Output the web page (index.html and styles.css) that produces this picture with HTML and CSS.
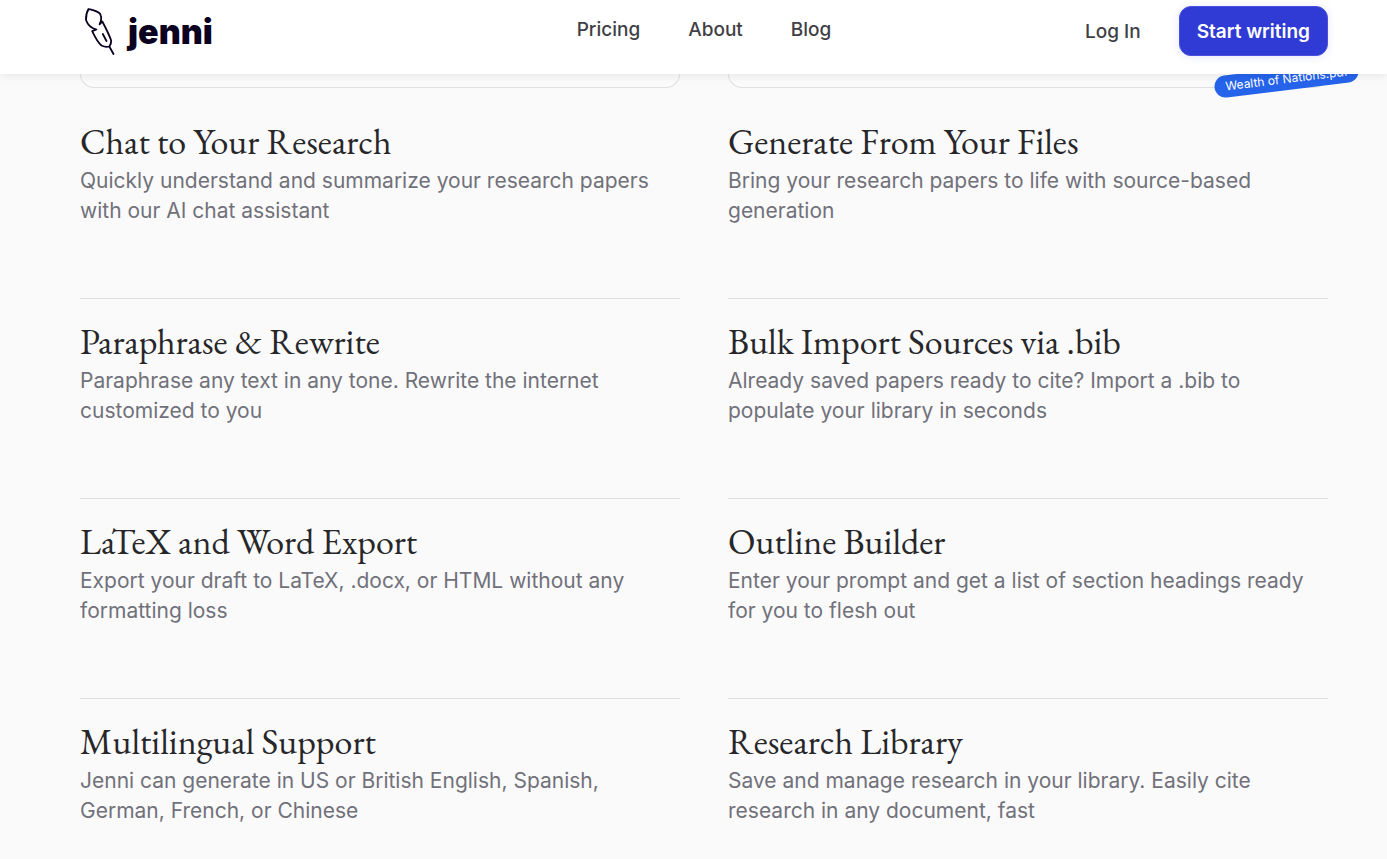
FILE: index.html
```html
<!DOCTYPE html>
<html lang="en">
<head>
    <meta charset="UTF-8">
    <meta name="viewport" content="width=device-width, initial-scale=1.0">
    <title>Jenni AI</title>
    <link rel="stylesheet" href="styles.css">
</head>
<body>
    <header class="header">
        <a href="#" class="logo">
            <svg class="logo-icon" viewBox="0 0 34 50" fill="none" stroke="currentColor" stroke-width="1.8" stroke-linejoin="round" stroke-linecap="round" aria-hidden="true">
                <path d="M4.500 3C2.500 6.500 1.800 10 2 14C3.500 18.500 6.500 22 12.500 23.500L8.200 25.200C11 31 13.500 36.500 17.500 39.500C20 40.800 22.500 41.200 25.300 40.500C27 38.500 27.300 36.800 27.200 34.500C25 28.500 21.500 21.500 18.300 15.500L15.600 18.300C17.700 14.500 17.500 11 16.200 8C13 4.800 9 4.200 4.500 3Z"/>
                <path d="M18.800 28L22.500 35M25.300 40.500L29.500 48"/>
            </svg>
            <span class="logo-text">jenni</span>
        </a>
        <nav class="nav">
            <a href="#">Pricing</a>
            <a href="#">About</a>
            <a href="#">Blog</a>
        </nav>
        <div class="actions">
            <a href="#" class="login">Log In</a>
            <button type="button" class="btn">Start writing</button>
        </div>
    </header>

    <main class="features">
        <section class="feature feature-media">
            <div class="preview"></div>
            <h3>Chat to Your Research</h3>
            <p>Quickly understand and summarize your research papers with our AI chat assistant</p>
        </section>
        <section class="feature feature-media">
            <div class="preview">
                <span class="file-tag">Wealth of Nations.pdf</span>
            </div>
            <h3>Generate From Your Files</h3>
            <p>Bring your research papers to life with source-based generation</p>
        </section>
        <section class="feature">
            <h3>Paraphrase &amp; Rewrite</h3>
            <p>Paraphrase any text in any tone. Rewrite the internet customized to you</p>
        </section>
        <section class="feature">
            <h3>Bulk Import Sources via .bib</h3>
            <p>Already saved papers ready to cite? Import a .bib to populate your library in seconds</p>
        </section>
        <section class="feature">
            <h3>LaTeX and Word Export</h3>
            <p>Export your draft to LaTeX, .docx, or HTML without any formatting loss</p>
        </section>
        <section class="feature">
            <h3>Outline Builder</h3>
            <p>Enter your prompt and get a list of section headings ready for you to flesh out</p>
        </section>
        <section class="feature">
            <h3>Multilingual Support</h3>
            <p>Jenni can generate in US or British English, Spanish, German, French, or Chinese</p>
        </section>
        <section class="feature">
            <h3>Research Library</h3>
            <p>Save and manage research in your library. Easily cite research in any document, fast</p>
        </section>
    </main>
</body>
</html>
```
FILE: styles.css
```css
* {
    margin: 0;
    padding: 0;
    box-sizing: border-box;
}

body {
    font-family: Inter, 'Liberation Sans', sans-serif;
    background: #fafafa;
    color: #27272a;
}

a {
    color: inherit;
    text-decoration: none;
}

.header {
    position: sticky;
    top: 0;
    z-index: 10;
    display: grid;
    grid-template-columns: 1fr auto 1fr;
    align-items: center;
    padding: 6px 59px 18px 80px;
    background: white;
    box-shadow: 0 2px 8px rgba(0,0,0,0.08);
}

.logo {
    display: flex;
    align-items: center;
    gap: 10px;
    padding-left: 4px;
    color: #0b0120;
}

.logo-icon {
    width: 34px;
    height: 50px;
}

.logo-text {
    padding-top: 2px;
    font-size: 34px;
    font-weight: 900;
    line-height: 48px;
}

.nav {
    display: flex;
    gap: 48px;
    padding-bottom: 2px;
}

.nav a,
.login {
    color: #3f3f46;
    font-size: 19px;
    font-weight: 500;
    line-height: 28px;
}

.actions {
    display: flex;
    align-items: center;
    justify-content: flex-end;
    gap: 38px;
}

.login {
    padding-top: 2px;
}

.btn {
    background: #303bd5;
    color: white;
    border: 1px solid #4a50dc;
    border-radius: 12px;
    padding: 11px 17px 9px;
    font-family: inherit;
    font-size: 19px;
    font-weight: 600;
    line-height: 28px;
    cursor: pointer;
    box-shadow: 0 1px 8px rgba(48,59,213,0.12);
}

.features {
    display: grid;
    grid-template-columns: repeat(2, minmax(0, 1fr));
    column-gap: 48px;
    padding: 0 59px 0 80px;
}

.feature {
    border-top: 1px solid #e0e0e2;
    padding: 23px 0 72px;
}

.feature-media {
    border-top: none;
    padding-top: 0;
}

.preview {
    position: relative;
    height: 14px;
    margin-bottom: 34px;
    border: 1px solid #e0e0e2;
    border-top: none;
    border-radius: 0 0 16px 16px;
}

/* file chip hanging off the corner of the preview */
.file-tag {
    position: absolute;
    right: -32px;
    bottom: -3px;
    padding: 0 11px;
    border-radius: 12px;
    background: #2563eb;
    color: white;
    font-size: 12px;
    line-height: 22px;
    white-space: nowrap;
    transform: rotate(-7deg);
}

.feature h3 {
    font-family: 'EB Garamond', 'Liberation Serif', serif;
    font-size: 36px;
    font-weight: 400;
    line-height: 40px;
    margin-bottom: 4px;
}

.feature p {
    color: #71717a;
    font-size: 21px;
    line-height: 30px;
}
```
